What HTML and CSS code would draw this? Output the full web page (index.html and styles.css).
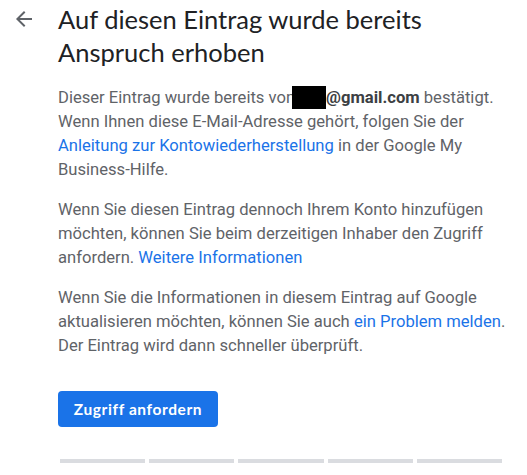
FILE: index.html
```html
<!DOCTYPE html>
<html lang="de">
<head>
    <meta charset="UTF-8">
    <meta name="viewport" content="width=device-width, initial-scale=1.0">
    <title>Anspruch erhoben</title>
    <link rel="stylesheet" href="styles.css">
</head>
<body>

<div class="kopf">
    <button class="zurueck" aria-label="Zurück">
        <svg width="24" height="24" viewBox="0 0 24 24">
            <path d="M20 11H7.83l5.59-5.59L12 4l-8 8 8 8 1.41-1.41L7.83 13H20v-2z" fill="#5f6368"/>
        </svg>
    </button>
    <h1>Auf diesen Eintrag wurde bereits Anspruch erhoben</h1>
</div>

<div class="inhalt">
    <p>Dieser Eintrag wurde bereits von<span class="geschwaerzt"></span><b>@gmail.com</b> bestätigt. Wenn Ihnen diese E-Mail-Adresse gehört, folgen Sie der <a href="#">Anleitung zur Kontowiederherstellung</a> in der Google My Business-Hilfe.</p>

    <p>Wenn Sie diesen Eintrag dennoch Ihrem Konto hinzufügen möchten, können Sie beim derzeitigen Inhaber den Zugriff anfordern. <a href="#">Weitere Informationen</a></p>

    <p>Wenn Sie die Informationen in diesem Eintrag auf Google aktualisieren möchten, können Sie auch <a href="#">ein Problem melden</a>. Der Eintrag wird dann schneller überprüft.</p>

    <button class="anfordern">Zugriff anfordern</button>

    <!-- Ladebalken unten -->
    <div class="balken">
        <span></span>
        <span></span>
        <span></span>
        <span></span>
        <span></span>
    </div>
</div>

</body>
</html>
```

FILE: styles.css
```css
body {
    margin: 0;
    padding: 0;
    background-color: #fff;
    font-family: Roboto, Arial, sans-serif;
    color: #5f6368;
}

.kopf {
    display: flex;
    align-items: flex-start;
    padding-top: 3px;
}

.zurueck {
    width: 24px;
    height: 24px;
    margin: 4px 22px 0 12px;
    padding: 0;
    border: none;
    background: none;
    cursor: pointer;
}

.zurueck svg {
    display: block;
}

h1 {
    margin: 0;
    font-family: Lato, "Open Sans", sans-serif;
    font-weight: 400;
    font-size: 25.5px;
    line-height: 33px;
    color: #202124;
    width: 440px;
}

.inhalt {
    padding: 17px 0 0 58px;
    width: 455px;
}

p {
    margin: 0 0 16px 0;
    font-size: 16.6px;
    line-height: 24px;
}

p b {
    font-weight: 700;
    color: #3c4043;
}

a {
    color: #1a73e8;
    text-decoration: none;
}

.geschwaerzt {
    display: inline-block;
    width: 34px;
    height: 23px;
    margin-left: -3px;
    vertical-align: -6px;
    background-color: #000;
}

.anfordern {
    display: block;
    margin-top: 33px;
    width: 160px;
    height: 36px;
    border: none;
    border-radius: 4px;
    background-color: #1a73e8;
    color: #fff;
    font-family: Lato, "Open Sans", sans-serif;
    font-weight: 700;
    font-size: 15.5px;
    letter-spacing: 0.6px;
    cursor: pointer;
}

.balken {
    display: flex;
    gap: 4px;
    width: 442px;
    margin: 32px 0 0 2px;
}

.balken span {
    flex: 1;
    height: 4px;
    background-color: #dadce0;
}
```
